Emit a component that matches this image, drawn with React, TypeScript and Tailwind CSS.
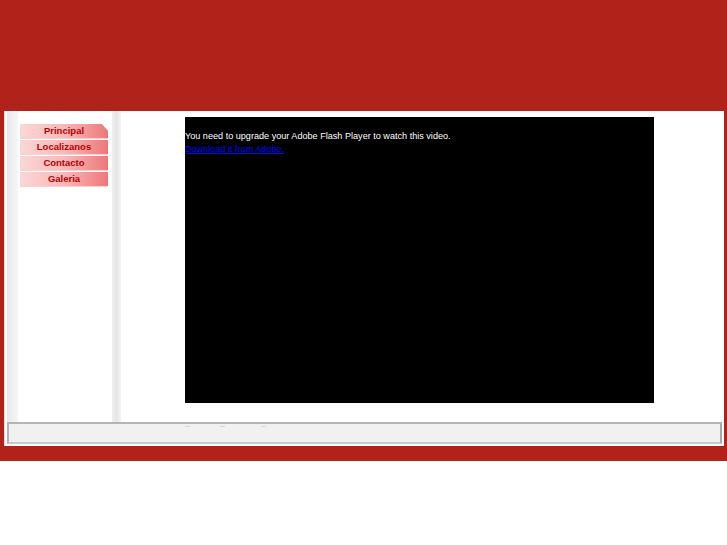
import React from "react";

const navItems = ["Principal", "Localizanos", "Contacto", "Galeria"];

export default function App() {
  return (
    <div className="w-[727px] h-[545px] bg-white" style={{ fontFamily: '"Liberation Sans", Arial, sans-serif' }}>
      <div className="h-[461px] bg-[#b1231a] pt-[111px] pl-[4px] pr-[3px]">
        <div className="h-[335px] bg-white border-l border-[#f4d6d4] flex flex-col">
          <div className="h-[311px] flex">
            <div className="ml-[2px] w-[11px] h-full bg-gradient-to-r from-[#e9e9e9] via-[#efefef] to-[#f7f7f7]" />
            <div className="ml-[2px] w-[88px] mt-[13px] flex flex-col">
              {navItems.map((item, i) => (
                <div
                  key={item}
                  className={
                    "h-[15px] mb-[1px] flex items-center justify-center bg-gradient-to-r from-[#fcd6d6] via-[#f8b8b8] to-[#ec7878] border-b border-[#f9d0d0] text-[9.5px] font-bold text-[#b80000] " +
                    (i === 0 ? "[clip-path:polygon(0_0,93%_0,100%_45%,100%_100%,0_100%)]" : "")
                  }
                >
                  {item}
                </div>
              ))}
            </div>
            <div className="ml-[4px] w-[9px] h-full bg-gradient-to-r from-[#efefef] via-[#e6e6e6] to-[#f4f4f4]" />
            <div className="ml-[64px] mt-[6px] w-[469px] h-[286px] bg-black pt-[13px] text-[9.1px] leading-[13px] text-white">
              <div>You need to upgrade your Adobe Flash Player to watch this video.</div>
              <a href="#" className="text-[#0000ff] underline">Download it from Adobe.</a>
            </div>
          </div>
          <div className="ml-[2px] mr-[2px] h-[22px] border-2 border-[#b4b4b4] border-b-[#c8c8c8] border-r-[#a8a8a8] bg-[#f1f1f1] flex items-start">
            <div className="ml-[176px] mt-[2px] w-[5px] h-px bg-[#d8d8d8]" />
            <div className="ml-[30px] mt-[2px] w-[5px] h-px bg-[#d8d8d8]" />
            <div className="ml-[36px] mt-[2px] w-[5px] h-px bg-[#d8d8d8]" />
          </div>
        </div>
      </div>
    </div>
  );
}
